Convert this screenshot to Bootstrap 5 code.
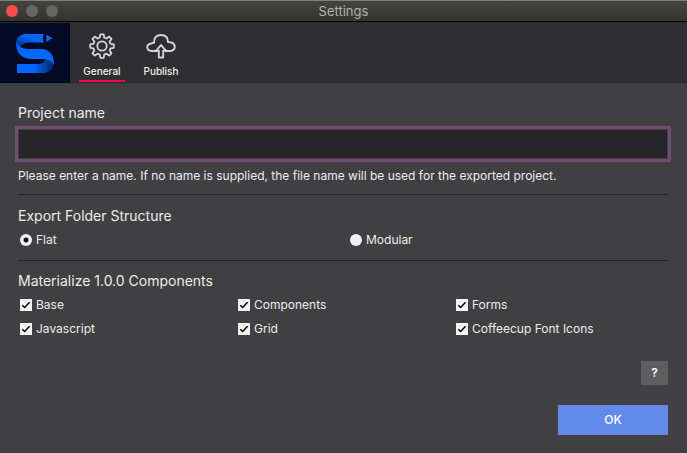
<!DOCTYPE html>
<html lang="en">
<head>
<meta charset="utf-8">
<meta name="viewport" content="width=device-width, initial-scale=1">
<title>Settings</title>
<link href="https://cdn.jsdelivr.net/npm/bootstrap@5.3.0/dist/css/bootstrap.min.css" rel="stylesheet">
<style>
body { background: #404042; color: #ececec; font: 400 12px/16px Inter, "Liberation Sans", sans-serif; }
.titlebar { height: 22px; padding: 0 6px; background: linear-gradient(#43443f, #34352f); border-top: 1px solid #7c7f78; border-bottom: 1px solid #000; }
.lights { gap: 8px; flex: 1 0 0; }
.light { width: 12px; height: 12px; border-radius: 50%; background: #656661; }
.light-close { background: #ff4a4b; }
.window-title { font-size: 13px; font-weight: 400; color: #b2b3ae; }
.toolbar { background: #2f2f31; border-bottom: 1px solid #38383a; padding-top: 1px; }
.logo { width: 70px; height: 60px; background: #020a26; }
.tabs { padding-left: 9px; gap: 13px; }
.tab { width: 46px; height: 59px; padding: 9px 0 0; border: 0; border-bottom: 2px solid transparent; background: none; color: #f0f0f0; font-size: 10px; line-height: 14px; font-weight: 500; }
.tab svg { flex: none; margin-bottom: 4px; }
.tab.active { border-color: #f5054f; }
.settings { padding: 19px 19px 18px 18px; }
.heading { font-size: 14px; line-height: 20px; font-weight: 400; margin: 0; color: #ececec; }
.name-box, .name-box:focus { height: 30px; margin: 6px 0 9px; padding: 4px 8px; background: #262628; color: #eee; border: 1px solid #4d3850; border-radius: 0; box-shadow: 0 0 0 3px #6d5070; outline: 0; }
.rule { border: 0; border-top: 1px solid #262628; opacity: 1; margin: 10px 0 11px; }
.choices + .rule { margin-bottom: 10px; }
.choices { padding: 6px 0 2px 2px; }
.row.two-up { --bs-gutter-x: 12px; }
.row.three-up { --bs-gutter-x: 6px; row-gap: 8px; }
.choice { gap: 4px; }
.choice input { appearance: none; width: 12px; height: 12px; margin: 0; flex: none; background: #f2f2f2 center / 12px 12px no-repeat; }
.choice input[type=radio] { border-radius: 50%; }
.choice input[type=radio]:checked { background-image: radial-gradient(circle, #111 2px, transparent 3px); }
.choice input[type=checkbox]:checked { background-image: url("data:image/svg+xml,%3Csvg xmlns='http://www.w3.org/2000/svg' viewBox='0 0 12 12'%3E%3Cpath d='M2.3 6.2 4.6 8.5 9.6 3.3' fill='none' stroke='%23000' stroke-width='1.5'/%3E%3C/svg%3E"); }
.actions { gap: 20px; margin-top: 22px; }
.help-btn, .ok-btn { --bs-btn-border-radius: 0; --bs-btn-border-width: 0; --bs-btn-font-size: 12px; --bs-btn-padding-y: 0; --bs-btn-padding-x: 0; --bs-btn-color: #fff; --bs-btn-hover-color: #fff; --bs-btn-font-weight: 600; }
.help-btn { --bs-btn-bg: #5e5e60; --bs-btn-hover-bg: #6a6a6c; width: 27px; height: 24px; }
.ok-btn { --bs-btn-bg: #638aeb; --bs-btn-hover-bg: #7598ee; --bs-btn-font-weight: 500; width: 110px; height: 30px; }
</style>
</head>
<body>
<header>
  <div class="titlebar d-flex align-items-center">
    <div class="lights d-flex">
      <span class="light light-close"></span><span class="light"></span><span class="light"></span>
    </div>
    <div class="window-title">Settings</div>
    <div class="lights"></div>
  </div>
  <nav class="toolbar d-flex">
    <div class="logo">
      <svg width="70" height="60" viewBox="0 0 70 60" aria-hidden="true">
        <defs>
          <linearGradient id="fold-left" x1="0" y1="1" x2="0.7" y2="0"><stop offset="0" stop-color="#002a80"/><stop offset="0.3" stop-color="#003fa8"/><stop offset="0.75" stop-color="#0068ff"/></linearGradient>
          <linearGradient id="fold-right" x1="0" y1="0" x2="1" y2="0"><stop offset="0.45" stop-color="#0068ff"/><stop offset="0.9" stop-color="#002d80"/></linearGradient>
        </defs>
        <path d="M25 11H44Q41.500 15 44 19.500H28Q21 20 20 26L16 21Q16 12 25 11Z" fill="url(#fold-left)"/>
        <path d="M46 11.500 52.500 15.200 46 19Q47.500 15 46 11.500Z" fill="#0068ff"/>
        <path d="M17 41H40Q45 40 46 34L54 39Q53 49 44 50H17Z" fill="url(#fold-right)"/>
        <path d="M16 19Q19 26 28 26H42Q54 27 54 42Q51 36 43 36H31Q16 35 16 19Z" fill="#0068ff"/>
      </svg>
    </div>
    <div class="tabs d-flex">
      <button class="tab active d-flex flex-column align-items-center" type="button">
        <svg width="28" height="28" viewBox="0 0 28 28" fill="none" stroke="#d4d4d4" stroke-width="1.800" stroke-linejoin="round" aria-hidden="true">
          <path d="M12.300 2.300h3.400l.5 3.200 2.300 1 2.700-1.900 2.300 2.300-1.900 2.700 1 2.300 3.200.5v3.400l-3.200.5-1 2.300 1.900 2.700-2.300 2.300-2.700-1.900-2.300 1-.5 3.200h-3.400l-.5-3.200-2.300-1-2.700 1.900-2.300-2.300 1.900-2.700-1-2.300-3.200-.5v-3.400l3.200-.5 1-2.300-1.900-2.700 2.300-2.300 2.700 1.900 2.300-1z"/>
          <circle cx="14" cy="14" r="4.700"/>
        </svg>
        General
      </button>
      <button class="tab d-flex flex-column align-items-center" type="button">
        <svg width="32" height="28" viewBox="0 0 32 28" fill="none" stroke="#d4d4d4" stroke-width="1.900" stroke-linejoin="round" aria-hidden="true">
          <path d="M12 19H6.500Q2.200 18.500 2.200 15.200Q2.400 12 6.500 11.500Q7.500 10.500 9 10.800Q9 3 16 3Q23 3 23 10Q29.800 10 29.800 15.200Q29.300 18.700 25.500 19H20"/>
          <path d="M16 13 11.200 18.700H13.800V25.500H18.200V18.700H20.800Z"/>
        </svg>
        Publish
      </button>
    </div>
  </nav>
</header>
<main>
  <form class="settings" onsubmit="return false">
    <label class="heading d-block" for="project-name">Project name</label>
    <input class="form-control name-box" id="project-name" type="text" aria-describedby="name-help">
    <p class="mb-0" id="name-help">Please enter a name. If no name is supplied, the file name will be used for the exported project.</p>
    <hr class="rule">
    <h2 class="heading" id="folder-title">Export Folder Structure</h2>
    <div class="choices" role="radiogroup" aria-labelledby="folder-title">
      <div class="row two-up">
        <div class="col-6"><label class="choice d-flex align-items-center"><input type="radio" name="folder" checked>Flat</label></div>
        <div class="col-6"><label class="choice d-flex align-items-center"><input type="radio" name="folder">Modular</label></div>
      </div>
    </div>
    <hr class="rule">
    <h2 class="heading">Materialize 1.0.0 Components</h2>
    <div class="choices">
      <div class="row three-up">
        <div class="col-4"><label class="choice d-flex align-items-center"><input type="checkbox" checked>Base</label></div>
        <div class="col-4"><label class="choice d-flex align-items-center"><input type="checkbox" checked>Components</label></div>
        <div class="col-4"><label class="choice d-flex align-items-center"><input type="checkbox" checked>Forms</label></div>
        <div class="col-4"><label class="choice d-flex align-items-center"><input type="checkbox" checked>Javascript</label></div>
        <div class="col-4"><label class="choice d-flex align-items-center"><input type="checkbox" checked>Grid</label></div>
        <div class="col-4"><label class="choice d-flex align-items-center"><input type="checkbox" checked>Coffeecup Font Icons</label></div>
      </div>
    </div>
    <div class="actions d-flex flex-column align-items-end">
      <button class="btn help-btn" type="button" aria-label="Help">?</button>
      <button class="btn ok-btn" type="submit">OK</button>
    </div>
  </form>
</main>
<script src="https://cdn.jsdelivr.net/npm/bootstrap@5.3.0/dist/js/bootstrap.bundle.min.js"></script>
</body>
</html>
